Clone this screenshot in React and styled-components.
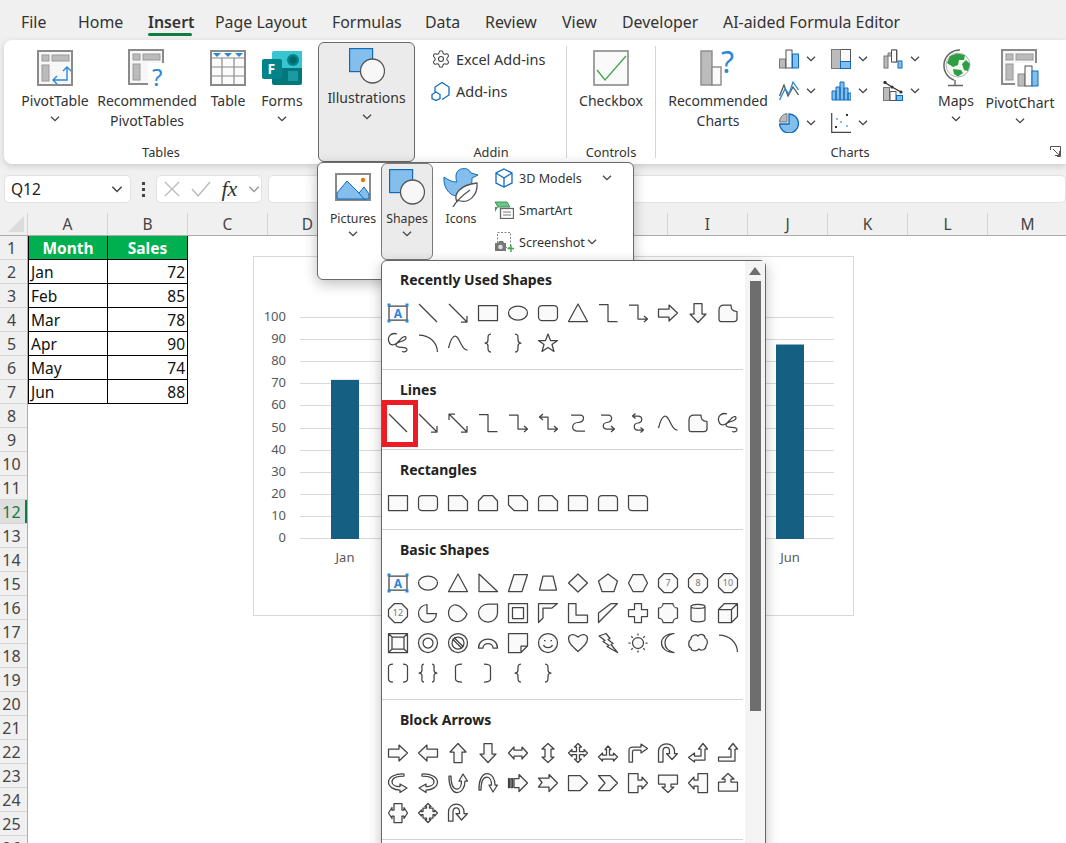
import React from 'react'
import styled, { createGlobalStyle } from 'styled-components'
import { Settings } from 'lucide-react'

const GlobalStyle = createGlobalStyle`
  html, body {
    margin: 0;
    padding: 0;
    background: #f0f0f0;
  }
`

const FONT = '"Noto Sans", "Open Sans", sans-serif'
const BLUE = '#0f6cbd'
const SKY = '#83beec'
const GREY = '#8a8a8a'

/* ---------- page ---------- */

const Page = styled.div`
  background: #f0f0f0;
  color: #333;
  font-family: ${FONT};
  font-size: 14px;
  height: 843px;
  overflow: hidden;
  position: relative;
  width: 1066px;
`

/* ---------- tabs ---------- */

const TabBar = styled.div`
  display: flex;
  height: 40px;
  padding-left: 21px;
`

const Tab = styled.div`
  box-sizing: border-box;
  flex: none;
  font-size: 15.9px;
  font-weight: ${props => (props.$active ? 600 : 400)};
  height: 36px;
  line-height: 44px;
  position: relative;
  white-space: nowrap;
  width: ${props => props.$w}px;

  ${props =>
    props.$active &&
    `
    &::after {
      background: #107c41;
      border-radius: 2px;
      bottom: 0;
      content: '';
      height: 3px;
      left: 0;
      position: absolute;
      width: 44px;
    }
  `}
`

/* ---------- ribbon ---------- */

const Ribbon = styled.div`
  background: #fff;
  border-radius: 8px 0 0 8px;
  box-shadow: 0 2px 6px rgba(0, 0, 0, 0.16);
  display: flex;
  height: 124px;
  margin-left: 4px;
`

const Group = styled.div`
  display: flex;
  flex: none;
  flex-direction: column;
  height: 124px;
  width: ${props => props.$w}px;
`

const GroupRule = styled.div`
  align-self: flex-start;
  background: #d4d4d4;
  flex: none;
  height: 112px;
  margin-top: 6px;
  width: 1px;
`

const GroupBody = styled.div`
  display: flex;
  flex: 1;
  padding-left: ${props => props.$pad || 0}px;
`

const GroupLabel = styled.div`
  font-size: 12.8px;
  height: 24px;
  line-height: 24px;
  padding-right: ${props => props.$right || 0}px;
  position: relative;
  text-align: center;
`

const Launcher = styled.svg`
  height: 11px;
  position: absolute;
  right: 5px;
  top: 6px;
  width: 11px;
`

const BigButton = styled.div`
  align-items: center;
  display: flex;
  flex: none;
  flex-direction: column;
  padding-top: 10px;
  text-align: center;
  width: ${props => props.$w}px;
`

const BigIcon = styled.div`
  align-items: center;
  display: flex;
  height: 36px;
  justify-content: center;
`

const BigLabel = styled.div`
  line-height: 20px;
  margin-top: ${props => props.$gap || 5}px;
  white-space: nowrap;
`

const Drop = styled.svg`
  display: block;
  fill: none;
  flex: none;
  height: ${props => (props.$wide ? 7 : 6)}px;
  margin-left: ${props => props.$left || 0}px;
  margin-top: ${props => props.$top || 0}px;
  stroke: ${props => props.$tone || '#444'};
  stroke-width: 1.3;
  width: ${props => (props.$wide ? 12 : 10)}px;
`

const OpenButton = styled.div`
  align-items: center;
  background: #ebebeb;
  border: 1px solid #6a6a6a;
  border-radius: 6px;
  box-sizing: border-box;
  display: flex;
  flex: none;
  flex-direction: column;
  height: 120px;
  margin: 2px 1px 0 0;
  padding-top: 5px;
  width: 97px;
`

const OpenLabel = styled(BigLabel)`
  margin-top: 4px;
`

const SmallRow = styled.div`
  align-items: center;
  display: flex;
  font-size: 14.5px;
  gap: 5px;
  height: 32px;
  white-space: nowrap;
`

const SmallStack = styled.div`
  display: flex;
  flex-direction: column;
  padding-top: 3px;
`

const ChartPicker = styled.div`
  display: grid;
  flex: none;
  grid-auto-rows: 32px;
  grid-template-columns: repeat(3, 52px);
  margin-left: 9px;
  padding-top: 3px;
`

const ChartPick = styled.div`
  align-items: center;
  display: flex;
  gap: 7px;
`

/* ---------- formula bar ---------- */

const FormulaBar = styled.div`
  align-items: center;
  display: flex;
  height: 28px;
  margin: 11px 0 10px;
  padding-left: 4px;
`

const Field = styled.div`
  align-items: center;
  background: #fff;
  border: 1px solid #e2e2e2;
  border-radius: 5px;
  box-sizing: border-box;
  display: flex;
  flex: ${props => (props.$grow ? 1 : 'none')};
  height: 28px;
  justify-content: space-between;
  padding: 0 7px 0 6px;
  width: ${props => (props.$w ? `${props.$w}px` : 'auto')};
`

const NameText = styled.span`
  color: #222;
  font-size: 15.5px;
`

const Grip = styled.div`
  display: flex;
  flex: none;
  flex-direction: column;
  gap: 3px;
  margin: 0 11px;
  width: 3px;

  span {
    background: #444;
    height: 3px;
    width: 3px;
  }
`

const FxButtons = styled(Field)`
  margin-right: 6px;
  padding: 0 1px 0 7px;
`

const FxGlyph = styled.span`
  color: #333;
  font-family: "Liberation Serif", serif;
  font-size: 22px;
  font-style: italic;
`

/* ---------- sheet ---------- */

const ColHeaders = styled.div`
  border-bottom: 1px solid #ababab;
  display: flex;
  height: 22px;
`

const Corner = styled.div`
  border-right: 1px solid #d4d4d4;
  box-sizing: border-box;
  flex: none;
  position: relative;
  width: 28px;

  &::after {
    border-bottom: 16px solid #dcdcdc;
    border-left: 16px solid transparent;
    bottom: 3px;
    content: '';
    position: absolute;
    right: 3px;
  }
`

const ColHead = styled.div`
  border-right: 1px solid #d6d6d6;
  box-sizing: border-box;
  color: #444;
  flex: none;
  font-size: 15.5px;
  line-height: 22px;
  text-align: center;
  width: 80px;
`

const SheetBody = styled.div`
  background: #fff;
  display: flex;
  height: 607px;
  position: relative;
`

const RowHeaders = styled.div`
  background: #f0f0f0;
  border-right: 1px solid #ababab;
  flex: none;
  width: 27px;
`

const RowHead = styled.div`
  background: ${props => (props.$current ? '#dedede' : 'transparent')};
  border-bottom: 1px solid #d6d6d6;
  box-shadow: ${props => (props.$current ? 'inset -2px 0 #107c41' : 'none')};
  box-sizing: border-box;
  color: ${props => (props.$current ? '#107c41' : '#444')};
  font-size: 16px;
  height: 24px;
  line-height: 24px;
  padding-right: 4px;
  text-align: center;
`

const DataTable = styled.div`
  align-self: flex-start;
  border-left: 1px solid #000;
  display: grid;
  grid-auto-rows: 24px;
  grid-template-columns: 79px 80px;
`

const Cell = styled.div`
  background: ${props => (props.$head ? '#00b050' : '#fff')};
  border-bottom: 1px solid #000;
  border-right: 1px solid #000;
  box-sizing: border-box;
  color: ${props => (props.$head ? '#fff' : '#111')};
  font-size: 15.5px;
  font-weight: ${props => (props.$head ? 700 : 400)};
  line-height: 24px;
  padding: 0 2px 0 2px;
  text-align: ${props => (props.$head ? 'center' : props.$num ? 'right' : 'left')};
`

const ChartCard = styled.div`
  background: #fff;
  border: 1px solid #d9d9d9;
  box-sizing: border-box;
  height: 360px;
  left: 253px;
  position: absolute;
  top: 20px;
  width: 601px;
`

const ChartSvg = styled.svg`
  display: block;
  font-family: ${FONT};
  font-size: 13px;
  height: 358px;
  width: 599px;
`

/* ---------- illustrations popup ---------- */

const Popup = styled.div`
  background: #fff;
  border: 1px solid #6a6a6a;
  border-radius: 6px;
  box-shadow: 0 4px 14px rgba(0, 0, 0, 0.25);
  box-sizing: border-box;
  display: flex;
  height: 118px;
  left: 317px;
  padding-left: 9px;
  position: absolute;
  top: 162px;
  width: 317px;
`

const PopItem = styled.div`
  align-items: center;
  background: ${props => (props.$open ? '#ebebeb' : 'transparent')};
  border: 1px solid ${props => (props.$open ? '#7a7a7a' : 'transparent')};
  border-radius: 6px;
  box-sizing: border-box;
  display: flex;
  flex: none;
  flex-direction: column;
  font-size: 12.3px;
  height: 97px;
  margin-left: ${props => props.$left || 0}px;
  padding-top: 5px;
  width: ${props => props.$w}px;
`

const PopIcon = styled.div`
  align-items: center;
  display: flex;
  height: 36px;
  justify-content: center;
`

const PopLabel = styled.div`
  line-height: 20px;
  margin-top: 4px;
`

const PopList = styled.div`
  display: flex;
  flex-direction: column;
  margin-left: 8px;
  margin-top: -1px;
`

const PopRow = styled.div`
  align-items: center;
  display: flex;
  font-size: 12.6px;
  gap: 5px;
  height: 32px;
  white-space: nowrap;
`

const RowIcon = styled.div`
  align-items: center;
  display: flex;
  flex: none;
  justify-content: center;
  width: 20px;
`

/* ---------- shapes gallery ---------- */

const Gallery = styled.div`
  background: #fff;
  border: 1.5px solid #666;
  border-radius: 6px 6px 0 0;
  box-shadow: 0 4px 14px rgba(0, 0, 0, 0.25);
  box-sizing: border-box;
  display: flex;
  height: 640px;
  left: 381px;
  position: absolute;
  top: 260px;
  width: 385px;
`

const GalleryList = styled.div`
  flex: none;
  width: 363px;
`

const Section = styled.section`
  border-bottom: 1px solid #d2d2d2;
  margin-right: 2px;
  padding: 10px 0 11px;

  &:first-child {
    padding-top: 9px;
  }
`

const SectionTitle = styled.h3`
  color: #222;
  font-size: 14px;
  font-weight: 700;
  line-height: 20px;
  margin: 0 0 8px;
  padding-left: 18px;
`

const ShapeGrid = styled.div`
  display: grid;
  grid-auto-rows: 30px;
  grid-template-columns: repeat(12, 30px);
  padding-left: 1px;
`

const ShapeCell = styled.div`
  align-items: center;
  display: flex;
  justify-content: center;
  position: relative;

  ${props =>
    props.$marked &&
    `
    &::after {
      border: 5px solid #ed1c24;
      bottom: -9px;
      content: '';
      left: -1px;
      position: absolute;
      right: -5px;
      top: -8px;
    }
  `}
`

const ShapeSvg = styled.svg`
  display: block;
  fill: #fafafa;
  font-family: ${FONT};
  height: 20px;
  overflow: visible;
  stroke: #444;
  stroke-linejoin: round;
  stroke-width: 1.25;
  width: 20px;

  text {
    fill: #777;
    font-size: 9px;
    stroke: none;
    text-anchor: middle;
  }
`

const ScrollBar = styled.div`
  align-items: center;
  background: #f4f4f4;
  display: flex;
  flex: 1;
  flex-direction: column;
  padding-top: 6px;
`

const ScrollUp = styled.div`
  border-bottom: 8px solid #6e6e6e;
  border-left: 6px solid transparent;
  border-right: 6px solid transparent;
`

const ScrollThumb = styled.div`
  background: #6e6e6e;
  height: 430px;
  margin-top: 6px;
  width: 11px;
`

/* ---------- ribbon icons ---------- */

const Down = ({ top, left, wide, tone }) => (
  <Drop $left={left} $tone={tone} $top={top} $wide={wide} viewBox="0 0 10 6">
    <path d="M1 .7L5 4.7L9 .7" />
  </Drop>
)

const FrameParts = () => (
  <>
    <rect fill="#f7f7f7" height="34" stroke={GREY} strokeWidth="2" width="34" x="1" y="1" />
    <rect fill="#bbb" height="6" stroke="#999" width="7" x="5" y="5" />
    <rect fill="#bbb" height="6" stroke="#999" width="17" x="15" y="5" />
    <rect fill="#bbb" height="16" stroke="#999" width="7" x="5" y="15" />
  </>
)

const PivotTableIcon = () => (
  <svg height="36" viewBox="0 0 36 36" width="36">
    <FrameParts />
    <path d="M16 30H30V17M26 21L30 17L34 21M20 26L16 30L20 34" fill="none" stroke="#2b88d8" strokeWidth="1.4" />
  </svg>
)

const PivotHelpIcon = () => (
  <svg height="38" viewBox="0 0 38 38" width="38">
    <FrameParts />
    <rect fill="#fff" height="24" width="18" x="20" y="14" />
    <text fill="#2b88d8" fontFamily={FONT} fontSize="24" x="24" y="37">?</text>
  </svg>
)

const TableIcon = () => (
  <svg height="36" viewBox="0 0 36 36" width="36">
    <rect fill="#fbfbfb" height="34" stroke={GREY} strokeWidth="2" width="34" x="1" y="1" />
    <path d="M1 8H35M1 17H35M1 26H35M12 8V35M24 8V35" fill="none" stroke={GREY} strokeWidth="1.2" />
    <path d="M3 3H11L7 7ZM14 3H22L18 7ZM25 3H33L29 7Z" fill="#2b88d8" />
  </svg>
)

const FormsIcon = () => (
  <svg height="36" viewBox="0 0 40 36" width="40">
    <path d="M10 3A2 2 0 0 1 12 1H40V18H10Z" fill="#37c6d0" />
    <path d="M10 18H40V33A2 2 0 0 1 38 35H12A2 2 0 0 1 10 33Z" fill="#03787c" />
    <circle cx="31" cy="10" fill="#038387" r="6" />
    <circle cx="31" cy="10" fill="#03686c" r="3.6" />
    <rect fill="#1a9ba1" height="10" width="10" x="26" y="21" />
    <rect fill="#038387" height="20" rx="2" width="20" y="9" />
    <text fill="#fff" fontFamily={FONT} fontSize="14" fontWeight="700" x="5.5" y="24">F</text>
  </svg>
)

const ShapesIcon = () => (
  <svg height="36" viewBox="0 0 36 36" width="36">
    <rect fill={SKY} height="23" stroke={BLUE} strokeWidth="1.2" width="23" x=".6" y=".6" />
    <circle cx="23.5" cy="23" fill="#f7f7f7" r="12" stroke="#555" strokeWidth="1.3" />
  </svg>
)

const AddInsIcon = () => (
  <svg height="20" viewBox="0 0 20 20" width="20">
    <path d="M4 11V6L11 1.5L18 6V14L11 18.5" fill="none" stroke={BLUE} strokeWidth="1.3" />
    <path d="M5 11L9 13.5V17.5L5 19.5L1 17.5V13.5Z" fill="#fff" stroke={BLUE} strokeWidth="1.3" />
  </svg>
)

const CheckboxIcon = () => (
  <svg height="36" viewBox="0 0 36 36" width="36">
    <rect fill="#fafafa" height="34" stroke={GREY} strokeWidth="1.6" width="34" x="1" y="1" />
    <path d="M4 20L12 30L33 6" fill="none" stroke="#3fa648" strokeWidth="1.3" />
  </svg>
)

const RecommendedChartsIcon = () => (
  <svg height="36" viewBox="0 0 36 36" width="36">
    <rect fill="#bcbcbc" height="34" stroke={GREY} strokeWidth="1.4" width="11" x="1" y="1" />
    <rect fill="#fafafa" height="18" stroke={GREY} strokeWidth="1.4" width="9" x="12" y="17" />
    <text fill="#2b88d8" fontFamily={FONT} fontSize="30" x="21" y="23">?</text>
  </svg>
)

const ColumnsIcon = () => (
  <svg height="20" viewBox="0 0 20 20" width="20">
    <rect fill="#bbb" height="9" stroke="#777" width="6" x=".5" y="10" />
    <rect fill="#fafafa" height="18" stroke="#555" width="6" x="7" y="1" />
    <rect fill={SKY} height="14" stroke={BLUE} width="6" x="13.5" y="5" />
  </svg>
)

const TreemapIcon = () => (
  <svg height="20" viewBox="0 0 20 20" width="20">
    <rect fill="#fafafa" height="19" stroke="#555" width="19" x=".5" y=".5" />
    <rect fill="#bbb" height="19" stroke="#777" width="9" x=".5" y=".5" />
    <rect fill={SKY} height="7" stroke={BLUE} width="10" x="9.5" y="12.5" />
  </svg>
)

const WaterfallIcon = () => (
  <svg height="20" viewBox="0 0 20 20" width="20">
    <rect fill="#bbb" height="12" stroke="#777" width="4" x="1" y="7" />
    <path d="M5 4H9V1H14V13H10V7H5Z" fill="#bbb" stroke="#777" />
    <rect fill="#fafafa" height="12" stroke="#555" width="5" x="8.5" y="1" />
    <rect fill={SKY} height="7" stroke={BLUE} width="4" x="15" y="12" />
  </svg>
)

const LineIcon = () => (
  <svg height="20" viewBox="0 0 20 20" width="20">
    <path d="M.5 15L5 4L9 15L14 6L19.5 14" fill="none" stroke="#555" strokeWidth="1.3" />
    <path d="M.5 19L6 8L10 13L14 1L19.5 9" fill="none" stroke="#2b88d8" strokeWidth="1.3" />
  </svg>
)

const StatsIcon = () => (
  <svg height="20" viewBox="0 0 20 20" width="20">
    <path d="M1 10H5V19H1ZM5 6H9V19H5ZM9 1H13V19H9ZM13 7H17V19H13ZM17 12H20V19H17Z" fill={SKY} stroke={BLUE} />
  </svg>
)

const ComboIcon = () => (
  <svg height="20" viewBox="0 0 20 20" width="20">
    <rect fill="#bbb" height="13" stroke="#777" width="6" x=".5" y="6.5" />
    <rect fill="#fafafa" height="9" stroke="#555" width="6" x="7" y="10.5" />
    <rect fill={SKY} height="5" stroke={BLUE} width="6" x="13.5" y="14.5" />
    <path d="M1 1L9 6L18 11" fill="none" stroke="#333" strokeWidth="1.4" />
    <circle cx="2" cy="1.5" fill="#333" r="1.6" />
    <circle cx="9" cy="6" fill="#333" r="1.6" />
    <circle cx="18" cy="11" fill="#333" r="1.6" />
  </svg>
)

const PieIcon = () => (
  <svg height="20" viewBox="0 0 20 20" width="20">
    <path d="M8 .5V9H.5A8.5 8.5 0 0 1 8 .5Z" fill="#bbb" stroke="#777" />
    <path d="M10 1A9.5 9.5 0 1 1 .5 11H10Z" fill={SKY} stroke={BLUE} strokeWidth="1.3" />
  </svg>
)

const ScatterIcon = () => (
  <svg height="20" viewBox="0 0 20 20" width="20">
    <path d="M.7 0V19.3H20" fill="none" stroke="#444" strokeWidth="1.2" />
    <path d="M5 5h2v2h-2zM15 12h2v2h-2zM9 8h2v2h-2z" fill={SKY} />
    <path d="M15 1h2v2h-2zM4 13h2v2h-2z" fill="#333" />
  </svg>
)

const MapsIcon = () => (
  <svg height="38" viewBox="0 0 30 38" width="30">
    <circle cx="17" cy="16" fill="#f1f8f1" r="12" stroke="#8a8a8a" strokeWidth=".6" />
    <path d="M9 7L16 4.5L24 6L23 11L18 11L17 16L12 18L6 14Z" fill="#2f9e44" />
    <path d="M25 11L29 15L27 22L23 21L21 15Z" fill="#2f9e44" />
    <path d="M12 20L20 21L22 24L17 27.5L13 25Z" fill="#2f9e44" />
    <path d="M19 1A15.5 15.5 0 0 0 13 31" fill="none" stroke="#666" strokeWidth="1.5" />
    <path d="M14 31V36M7 36.5H22" fill="none" stroke="#666" strokeWidth="1.4" />
  </svg>
)

const PivotChartIcon = () => (
  <svg height="38" viewBox="0 0 38 38" width="38">
    <FrameParts />
    <rect fill="#fff" height="24" width="24" x="14" y="14" />
    <rect fill="#bbb" height="12" stroke={GREY} width="7" x="17" y="25" />
    <rect fill="#fafafa" height="20" stroke="#555" width="7" x="24" y="17" />
    <rect fill={SKY} height="15" stroke={BLUE} width="6" x="31" y="22" />
  </svg>
)

const PicturesIcon = () => (
  <svg height="28" viewBox="0 0 36 28" width="36">
    <rect fill="#fff" height="26" stroke={GREY} strokeWidth="2" width="34" x="1" y="1" />
    <path d="M2 20L12 8L24 20L29 14L34 21V26H2Z" fill={SKY} stroke={BLUE} strokeWidth="1" />
    <path d="M24 20L30 27" fill="none" stroke={BLUE} />
    <circle cx="28" cy="7" fill="#e8750c" r="2.2" />
  </svg>
)

const DuckIcon = () => (
  <svg height="40" viewBox="0 0 36 40" width="36">
    <path d="M1 10C5 13 9 15 14 15C13 13 13 11 13 8A8 8 0 0 1 28 6L35 8L29 11C29 14 29 16 28 18C26 26 19 30 13 29C6 28 0 20 1 10Z" fill={SKY} stroke={BLUE} />
    <path d="M14 35C10 27 17 18 34 16C35 28 26 38 14 33Z" fill="#fff" stroke="#555" strokeWidth="1.3" />
    <path d="M10 40C14 33 20 28 27 23" fill="none" stroke="#555" strokeWidth="1.3" />
  </svg>
)

const CubeIcon = () => (
  <svg height="20" viewBox="0 0 18 20" width="18">
    <path d="M9 1L17 5V15L9 19L1 15V5ZM1 5L9 10L17 5M9 10V19" fill="#fff" stroke={BLUE} strokeWidth="1.3" />
  </svg>
)

const SmartArtIcon = () => (
  <svg height="18" viewBox="0 0 20 18" width="20">
    <path d="M1 1H13L16 6H4Z" fill="#72c08a" stroke="#3a9a5b" />
    <path d="M1 6L4 6L1 11Z" fill="#3a9a5b" />
    <rect fill="#fff" height="10" stroke="#666" strokeWidth="1.3" width="13" x="6.5" y="7.5" />
    <path d="M9 11H17M9 14H17" stroke="#777" />
  </svg>
)

const ScreenshotIcon = () => (
  <svg height="20" viewBox="0 0 20 20" width="20">
    <rect fill="none" height="15" stroke="#888" strokeDasharray="2 1.5" width="13" x="3.5" y=".5" />
    <path d="M1 11H4L5 9H9L10 11H12V19H1Z" fill="#777" />
    <circle cx="6.5" cy="15" fill="#ddd" r="2.3" />
    <path d="M17 13V20M13.5 16.5H20" stroke="#3fa648" strokeWidth="1.4" />
  </svg>
)

/* ---------- shape gallery drawings, 20x20, open paths stay unfilled ---------- */

const circle = 'M.5 10A9.5 9.5 0 1 1 19.5 10A9.5 9.5 0 1 1 .5 10Z'
const octagon = 'M6 .5H14L19.5 6V14L14 19.5H6L.5 14V6Z'
const scribble = 'M9 1C3 -1 -1 4 1 9C3 14 8 12 12 7C14 4 18 2 18 5C18 9 8 8 8 12C8 16 19 13 19 16.5C19 19 16 19 14 18.5'
const freeform = 'M1 7C1 4 3 2 6 2H13C13 6 14 8 19 8.5V16C19 18 18 18.5 16 18.5H3C1.5 18.5 1 18 1 16Z'
const curve = 'M.5 15C4 1 8 1 11 7C14 13 16 17 19.5 17'
const line = 'M1 1L19 19'
const arrowLine = 'M1 1L19 19M13 19H19V13'
const elbow = 'M1 1.5H10V18.5H19.5'
const elbowArrow = 'M1 2H10V16H19M16 13L19.5 16L16 19'
const rect = 'M.5 2.5H19.5V17.5H.5Z'
const rounded = 'M4 2.5H16A3.5 3.5 0 0 1 19.5 6V14A3.5 3.5 0 0 1 16 17.5H4A3.5 3.5 0 0 1 .5 14V6A3.5 3.5 0 0 1 4 2.5Z'
const oval = 'M.5 10A9.5 7 0 1 1 19.5 10A9.5 7 0 1 1 .5 10Z'
const triangle = 'M10 1L19.5 18.5H.5Z'
const braceL = 'M13 1C9.5 1 10 4 10 7C10 9 9 10 7 10C9 10 10 11 10 13C10 16 9.5 19 13 19'
const braceR = 'M7 1C10.5 1 10 4 10 7C10 9 11 10 13 10C11 10 10 11 10 13C10 16 10.5 19 7 19'
const arc = 'M1 2C11 2 19 9 19.5 19'
const blockRight = 'M.5 6H11V2L19.5 10L11 18V14H.5Z'
const blockDown = 'M6 .5V11H2L10 19.5L18 11H14V.5Z'

const textBox = (
  <>
    <rect height="14" width="18" x="1" y="3" />
    <path d="M-.5 .5h3v3h-3zM17.5 .5h3v3h-3zM-.5 16.5h3v3h-3zM17.5 16.5h3v3h-3z" fill="#2b88d8" stroke="none" />
    <text style={{ fill: '#2b88d8', fontSize: 12, fontWeight: 700 }} x="10" y="14.5">A</text>
  </>
)

const numbered = (d, n) => (
  <>
    <path d={d} />
    <text x="10" y="13.3">{n}</text>
  </>
)

const SHAPES = {
  recent: [
    textBox, line, arrowLine, rect, oval, rounded, triangle, elbow, elbowArrow, blockRight, blockDown, freeform,
    scribble, arc, curve, braceL, braceR,
    'M10 1L12.5 7.5H19.5L14 11.5L16 18.5L10 14.5L4 18.5L6 11.5L.5 7.5H7.5Z'
  ],
  lines: [
    line, arrowLine, 'M1 1L19 19M13 19H19V13M7 1H1V7', elbow, elbowArrow,
    'M2 4H10V16H19M16 13L19.5 16L16 19M5 1L1.5 4L5 7',
    'M3 2H12C17 2 17 9 10 9.5C3 10 3 18 9 18H17',
    'M3 2H10C15 2 15 9 9 9.5C4 10 4 16 9 16H16M13 13L16.5 16L13 19',
    'M5 3H10C15 3 15 9.5 10 10C5 10.5 5 17 10 17H15M12.5 14.5L15.5 17L12.5 19.5M7.5 .5L4.5 3L7.5 5.5',
    curve, freeform, scribble
  ],
  rectangles: [
    rect, rounded,
    'M.5 2.5H14L19.5 8V17.5H.5Z',
    'M5.5 2.5H14.5L19.5 8V17.5H.5V8Z',
    'M.5 2.5H14L19.5 8V17.5H6L.5 12Z',
    'M4 2.5H14L19.5 8V17.5H.5V6A3.5 3.5 0 0 1 4 2.5Z',
    'M.5 2.5H16A3.5 3.5 0 0 1 19.5 6V17.5H.5Z',
    'M4 2.5H16A3.5 3.5 0 0 1 19.5 6V17.5H.5V6A3.5 3.5 0 0 1 4 2.5Z',
    'M.5 2.5H16A3.5 3.5 0 0 1 19.5 6V17.5H4A3.5 3.5 0 0 1 .5 14Z'
  ],
  basic: [
    textBox, oval, triangle, 'M1 1L19.5 18.5H1Z', 'M6 1.5H19.5L14 18.5H.5Z', 'M5 3H15L18.5 17H1.5Z',
    'M10 1L19.5 10L10 19L.5 10Z', 'M10 1L19.5 8L16 18.5H4L.5 8Z', 'M5 1.5H15L19.5 10L15 18.5H5L.5 10Z',
    numbered(octagon, 7), numbered(octagon, 8), numbered(octagon, 10),
    numbered('M6.5 .5H13.5L19.5 6.5V13.5L13.5 19.5H6.5L.5 13.5V6.5Z', 12),
    'M9 1.5A9 9 0 1 0 18.5 10.5H9Z',
    'M6 2C10 1 14 4 19 11C17 17 12 19 8 18.5C3 18 .5 14 .5 10C.5 6 3 3 6 2Z',
    'M10 1H19.5V10A9.5 9 0 1 1 10 1Z',
    'M.5 .5H19.5V19.5H.5ZM4.5 4.5V15.5H15.5V4.5Z',
    'M.5 .5H19.5L14 5H5V15L.5 19.5Z',
    'M.5 .5H8V12H19.5V19.5H.5Z',
    'M.5 10L13 .5H19.5L.5 19.5Z',
    'M6.5 .5H13.5V6.5H19.5V13.5H13.5V19.5H6.5V13.5H.5V6.5H6.5Z',
    'M5 .5H15A4.5 4.5 0 0 0 19.5 5V15A4.5 4.5 0 0 0 15 19.5H5A4.5 4.5 0 0 0 .5 15V5A4.5 4.5 0 0 0 5 .5Z',
    'M3 3.5C3 .5 17 .5 17 3.5V16.5C17 19.5 3 19.5 3 16.5ZM3 3.5C3 6 17 6 17 3.5',
    'M.5 6.5L6.5 .5H19.5V13.5L13.5 19.5H.5ZM.5 6.5H13.5V19.5M13.5 6.5L19.5 .5',
    'M.5 .5H19.5V19.5H.5ZM4 4H16V16H4ZM.5 .5L4 4M19.5 .5L16 4M.5 19.5L4 16M19.5 19.5L16 16',
    `${circle}M5 10A5 5 0 1 0 15 10A5 5 0 1 0 5 10Z`,
    `${circle}M4 10A6 6 0 1 0 16 10A6 6 0 1 0 4 10ZM6 4.5L15.5 14M4.5 6L14 15.5`,
    'M.5 15C.5 3 19.5 3 19.5 15H15C15 9 5 9 5 15Z',
    'M.5 .5H19.5V13L13 19.5H.5ZM19.5 13H13V19.5',
    `${circle}M6 7.5h1.5M12.5 7.5h1.5M5.5 12C7 15.5 13 15.5 14.5 12`,
    'M10 18.5C4 13 .5 10 .5 5.5C.5 2 5 -.5 10 4C15 -.5 19.5 2 19.5 5.5C19.5 10 16 13 10 18.5Z',
    'M1 3L8 .5L12 5.5L10 6.5L15 10.5L13 11.5L19.5 19.5L9 13.5L11 12.5L5 8.5L7 7.5Z',
    'M4.5 10A5.5 5.5 0 1 0 15.5 10A5.5 5.5 0 1 0 4.5 10ZM10 .5V2.5M10 17.5V19.5M.5 10H2.5M17.5 10H19.5M3.3 3.3L4.7 4.7M15.3 15.3L16.7 16.7M3.3 16.7L4.7 15.3M15.3 4.7L16.7 3.3',
    'M16 .5C10 2 7 6 7 10C7 14 10 18 16 19.5C8 19.5 3.5 15 3.5 10C3.5 5 8 .5 16 .5Z',
    'M3 6C3 2 8 1 10 3C12 .5 17 1 17 5C20 6 20 11 18 13C18 17 13 18 11 16C8 19 3 18 3 15C0 14 0 8 3 6Z',
    arc,
    'M5 1C2 1 .5 2 .5 4V16C.5 18 2 19 5 19M15 1C18 1 19.5 2 19.5 4V16C19.5 18 18 19 15 19',
    'M6 1C3 1 4 4 4 7C4 9 3 10 1 10C3 10 4 11 4 13C4 16 3 19 6 19M14 1C17 1 16 4 16 7C16 9 17 10 19 10C17 10 16 11 16 13C16 16 17 19 14 19',
    'M14 1C10 1 7.5 2 7.5 4V16C7.5 18 10 19 14 19',
    'M6 1C10 1 12.5 2 12.5 4V16C12.5 18 10 19 6 19',
    braceL, braceR
  ],
  block: [
    blockRight, 'M19.5 6H9V2L.5 10L9 18V14H19.5Z', 'M6 19.5V9H2L10 .5L18 9H14V19.5Z', blockDown,
    'M.5 10L6 4V7H14V4L19.5 10L14 16V13H6V16Z',
    'M10 .5L16 6H13V14H16L10 19.5L4 14H7V6H4Z',
    'M10 .5L13.5 4H11.5V8.5H16V6.5L19.5 10L16 13.5V11.5H11.5V16H13.5L10 19.5L6.5 16H8.5V11.5H4V13.5L.5 10L4 6.5V8.5H8.5V4H6.5Z',
    'M10 3L13 6.5H11.5V12H15.5V10L19.5 14L15.5 18V16H4.5V18L.5 14L4.5 10V12H8.5V6.5H7Z',
    'M1 19V7C1 4 3 4 5 4H13V1L19.5 5.5L13 10V7H6C5 7 4.5 7.5 4.5 8.5V19Z',
    'M.5 19V8C.5 -1.5 16.5 -1.5 16.5 8V10.5H19.5L14 16.5L8.5 10.5H11.5V8C11.5 3 5 3 5 8V19Z',
    'M.5 14.5L6.5 10V13H13V6H10.5L15 .5L19.5 6H17V17H6.5V19Z',
    'M.5 14H13V6H10.5L15 .5L19.5 6H17V18H.5Z',
    'M16 1C7 .5 .5 4 .5 9C.5 14 6 17 12 17V19.5L19 15L12 11V13.5C8 13.5 4 12 4 9C4 5 9 3 16 3Z',
    'M4 1C13 .5 19.5 4 19.5 9C19.5 14 14 17 8 17V19.5L1 15L8 11V13.5C12 13.5 16 12 16 9C16 5 11 3 4 3Z',
    'M1 3C.5 12 4 19.5 9 19.5C14 19.5 17 14 17 8H19.5L15 1L11 8H13.5C13.5 12 12 16 9 16C5 16 3 11 3 3Z',
    'M1 17C.5 8 4 .5 9 .5C14 .5 17 6 17 12H19.5L15 19L11 12H13.5C13.5 8 12 4 9 4C5 4 3 9 3 17Z',
    'M.5 5.5H1.5V14.5H.5ZM3 5.5H4.5V14.5H3ZM6 5.5H11V1.5L19.5 10L11 18.5V14.5H6Z',
    'M.5 5H11V1.5L19.5 10L11 18.5V14H.5L4 9.5Z',
    'M.5 2.5H12L19.5 10L12 17.5H.5Z',
    'M.5 2.5H12L19.5 10L12 17.5H.5L7 10Z',
    'M.5 .5H10V7H14V4L19.5 10L14 16V13H10V19.5H.5Z',
    'M.5 2H19.5V11H13V14H16L10 19.5L4 14H7V11H.5Z',
    'M19.5 .5H10V7H6V4L.5 10L6 16V13H10V19.5H19.5Z',
    'M.5 18H19.5V9H13V6H16L10 .5L4 6H7V9H.5Z',
    'M6 .5H14V7H16V4.5L19.5 10L16 15.5V13H14V19.5H6V13H4V15.5L.5 10L4 4.5V7H6Z',
    'M10 .5L13 3.5H11.5V5H15V8.5H16.5V7L19.5 10L16.5 13V11.5H15V15H11.5V16.5H13L10 19.5L7 16.5H8.5V15H5V11.5H3.5V13L.5 10L3.5 7V8.5H5V5H8.5V3.5H7Z',
    'M.5 18V9C.5 -1.5 16 -1.5 16 9V10.5H19.5L13.5 17L8 10.5H11.5V9C11.5 3.5 5 3.5 5 9V18Z'
  ]
}

const ShapeGlyph = ({ shape }) => (
  <ShapeSvg viewBox="0 0 20 20">
    {typeof shape === 'string' ? <path d={shape} fill={/Z/.test(shape) ? undefined : 'none'} /> : shape}
  </ShapeSvg>
)

const SECTIONS = [
  { title: 'Recently Used Shapes', shapes: SHAPES.recent },
  { title: 'Lines', shapes: SHAPES.lines, marked: 0 },
  { title: 'Rectangles', shapes: SHAPES.rectangles },
  { title: 'Basic Shapes', shapes: SHAPES.basic },
  { title: 'Block Arrows', shapes: SHAPES.block }
]

/* ---------- data ---------- */

const TABS = [
  ['File', 57],
  ['Home', 70],
  ['Insert', 67, true],
  ['Page Layout', 117],
  ['Formulas', 93],
  ['Data', 60],
  ['Review', 77],
  ['View', 60],
  ['Developer', 101],
  ['AI-aided Formula Editor', 200]
]

const COLUMNS = ['A', 'B', 'C', 'D', 'E', 'F', 'G', 'H', 'I', 'J', 'K', 'L', 'M']
const ROWS = Array.from({ length: 26 }, (_, i) => i + 1)

const SALES = [
  ['Jan', 72],
  ['Feb', 85],
  ['Mar', 78],
  ['Apr', 90],
  ['May', 74],
  ['Jun', 88]
]

const TICKS = [100, 90, 80, 70, 60, 50, 40, 30, 20, 10, 0]
const BASELINE = 282
const UNIT = 2.21

const CHART_PICKS = [
  ColumnsIcon, TreemapIcon, WaterfallIcon,
  LineIcon, StatsIcon, ComboIcon,
  PieIcon, ScatterIcon
]

const SalesChart = () => (
  <ChartCard>
    <ChartSvg viewBox="0 0 599 358">
      {TICKS.map(tick => {
        const y = Math.round(BASELINE - tick * UNIT) - 0.5
        return (
          <g key={tick}>
            <line stroke="#d9d9d9" x1="46" x2="580" y1={y} y2={y} />
            <text fill="#595959" textAnchor="end" x="32" y={y + 3.5}>{tick}</text>
          </g>
        )
      })}
      {SALES.map(([month, value], i) => (
        <g key={month}>
          <rect fill="#156082" height={value * UNIT} width="28" x={77 + i * 89} y={BASELINE - value * UNIT} />
          <text fill="#595959" textAnchor="middle" x={91 + i * 89} y={BASELINE + 23}>{month}</text>
        </g>
      ))}
    </ChartSvg>
  </ChartCard>
)

const App = () => (
  <Page>
    <GlobalStyle />

    <TabBar>
      {TABS.map(([name, width, active]) => (
        <Tab $active={active} $w={width} key={name}>{name}</Tab>
      ))}
    </TabBar>

    <Ribbon>
      <Group $w={314}>
        <GroupBody $pad={12}>
          <BigButton $w={78}>
            <BigIcon><PivotTableIcon /></BigIcon>
            <BigLabel>PivotTable</BigLabel>
            <Down top={5} />
          </BigButton>
          <BigButton $w={106}>
            <BigIcon><PivotHelpIcon /></BigIcon>
            <BigLabel>Recommended<br />PivotTables</BigLabel>
          </BigButton>
          <BigButton $w={56}>
            <BigIcon><TableIcon /></BigIcon>
            <BigLabel>Table</BigLabel>
          </BigButton>
          <BigButton $w={52}>
            <BigIcon><FormsIcon /></BigIcon>
            <BigLabel>Forms</BigLabel>
            <Down top={5} />
          </BigButton>
        </GroupBody>
        <GroupLabel>Tables</GroupLabel>
      </Group>

      <OpenButton>
        <BigIcon><ShapesIcon /></BigIcon>
        <OpenLabel>Illustrations</OpenLabel>
        <Down top={6} />
      </OpenButton>

      <Group $w={150}>
        <GroupBody $pad={15}>
          <SmallStack>
            <SmallRow>
              <Settings color="#444" size={20} strokeWidth={1.3} />
              <span>Excel Add-ins</span>
            </SmallRow>
            <SmallRow>
              <AddInsIcon />
              <span>Add-ins</span>
            </SmallRow>
          </SmallStack>
        </GroupBody>
        <GroupLabel>Addin</GroupLabel>
      </Group>
      <GroupRule />

      <Group $w={88}>
        <GroupBody>
          <BigButton $w={88}>
            <BigIcon><CheckboxIcon /></BigIcon>
            <BigLabel>Checkbox</BigLabel>
          </BigButton>
        </GroupBody>
        <GroupLabel>Controls</GroupLabel>
      </Group>
      <GroupRule />

      <Group $w={410}>
        <GroupBody $pad={10}>
          <BigButton $w={104}>
            <BigIcon><RecommendedChartsIcon /></BigIcon>
            <BigLabel>Recommended<br />Charts</BigLabel>
          </BigButton>
          <ChartPicker>
            {CHART_PICKS.map(Icon => (
              <ChartPick key={Icon.name}>
                <Icon />
                <Down />
              </ChartPick>
            ))}
          </ChartPicker>
          <BigButton $w={42}>
            <BigIcon><MapsIcon /></BigIcon>
            <BigLabel>Maps</BigLabel>
            <Down top={5} />
          </BigButton>
          <BigButton $w={86}>
            <BigIcon><PivotChartIcon /></BigIcon>
            <BigLabel $gap={7}>PivotChart</BigLabel>
            <Down top={5} />
          </BigButton>
        </GroupBody>
        <GroupLabel $right={22}>
          Charts
          <Launcher viewBox="0 0 11 11">
            <path d="M.5 4V.5H10.5V10.5H7M3 3L9.5 9.5M9.5 5V9.5H5" fill="none" stroke="#555" />
          </Launcher>
        </GroupLabel>
      </Group>
    </Ribbon>

    <FormulaBar>
      <Field $w={127}>
        <NameText>Q12</NameText>
        <Down wide />
      </Field>
      <Grip>
        <span />
        <span />
        <span />
      </Grip>
      <FxButtons $w={106}>
        <svg height="16" viewBox="0 0 16 16" width="16">
          <path d="M1 1L15 15M15 1L1 15" stroke="#bbb" strokeWidth="1.4" />
        </svg>
        <svg height="16" viewBox="0 0 20 16" width="20">
          <path d="M1 8L7 15L19 1" fill="none" stroke="#bbb" strokeWidth="1.4" />
        </svg>
        <FxGlyph>fx</FxGlyph>
        <Down tone="#999" wide />
      </FxButtons>
      <Field $grow />
    </FormulaBar>

    <ColHeaders>
      <Corner />
      {COLUMNS.map(col => <ColHead key={col}>{col}</ColHead>)}
    </ColHeaders>

    <SheetBody>
      <RowHeaders>
        {ROWS.map(row => <RowHead $current={row === 12} key={row}>{row}</RowHead>)}
      </RowHeaders>
      <DataTable>
        <Cell $head>Month</Cell>
        <Cell $head>Sales</Cell>
        {SALES.map(([month, value]) => (
          <React.Fragment key={month}>
            <Cell>{month}</Cell>
            <Cell $num>{value}</Cell>
          </React.Fragment>
        ))}
      </DataTable>
      <SalesChart />
    </SheetBody>

    <Popup>
      <PopItem $w={52}>
        <PopIcon><PicturesIcon /></PopIcon>
        <PopLabel>Pictures</PopLabel>
        <Down top={2} />
      </PopItem>
      <PopItem $left={2} $open $w={52}>
        <PopIcon><ShapesIcon /></PopIcon>
        <PopLabel>Shapes</PopLabel>
        <Down top={2} />
      </PopItem>
      <PopItem $left={3} $w={50}>
        <PopIcon><DuckIcon /></PopIcon>
        <PopLabel>Icons</PopLabel>
      </PopItem>
      <PopList>
        <PopRow>
          <RowIcon><CubeIcon /></RowIcon>
          <span>3D Models</span>
          <Down left={15} />
        </PopRow>
        <PopRow>
          <RowIcon><SmartArtIcon /></RowIcon>
          <span>SmartArt</span>
        </PopRow>
        <PopRow>
          <RowIcon><ScreenshotIcon /></RowIcon>
          <span>Screenshot</span>
          <Down left={-3} />
        </PopRow>
      </PopList>
    </Popup>

    <Gallery>
      <GalleryList>
        {SECTIONS.map(({ title, shapes, marked }) => (
          <Section key={title}>
            <SectionTitle>{title}</SectionTitle>
            <ShapeGrid>
              {shapes.map((shape, i) => (
                <ShapeCell $marked={marked === i} key={i}>
                  <ShapeGlyph shape={shape} />
                </ShapeCell>
              ))}
            </ShapeGrid>
          </Section>
        ))}
      </GalleryList>
      <ScrollBar>
        <ScrollUp />
        <ScrollThumb />
      </ScrollBar>
    </Gallery>
  </Page>
)

export default App
